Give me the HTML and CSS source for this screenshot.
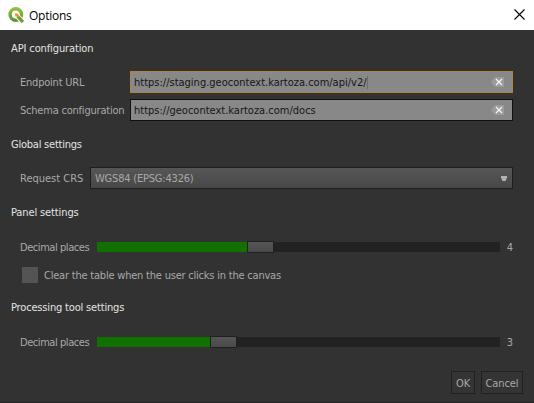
FILE: index.html
```html
<!DOCTYPE html>
<html lang="en">
<head>
<meta charset="utf-8">
<title>Options</title>
<link rel="stylesheet" href="styles.css">
</head>
<body>
<header class="titlebar">
  <svg class="logo" viewBox="0 0 16 16">
    <defs><linearGradient id="g" x1="0" y1="0" x2="0" y2="1"><stop offset="0" stop-color="#96be3c"/><stop offset="1" stop-color="#579a2d"/></linearGradient></defs>
    <circle cx="7.8" cy="7.5" r="5.7" fill="none" stroke="url(#g)" stroke-width="3.4"/>
    <path d="M8 8 15.5 15.5" stroke="#fff" stroke-width="5"/>
    <path d="M9.6 9.4 15 15" stroke="#6b9f35" stroke-width="3.2"/>
    <path d="M6.8 6.4h3.2l1.2 3.8-3.8-1z" fill="#ef8a35"/>
  </svg>
  <h1 class="title">Options</h1>
  <svg class="close" viewBox="0 0 11 11"><path d="M.5.5l10 10M10.5.5l-10 10"/></svg>
</header>
<main class="content">
  <h2 class="heading"><span class="t-api">API configuration</span></h2>
  <div class="row"><label class="label wide"><span class="t-endpoint">Endpoint URL</span></label>
    <div class="input focused"><span class="text">https://staging.geocontext.kartoza.com/api/v2/</span><i class="caret"></i>
      <svg class="clear" viewBox="0 0 13 10"><path class="tag" d="M0 5 3 1 4 0h9v10H4L3 9z"/><path class="x" d="M5 2l6 6M11 2 5 8"/></svg></div></div>
  <div class="row"><label class="label wide"><span class="t-schema">Schema configuration</span></label>
    <div class="input"><span class="text">https://geocontext.kartoza.com/docs</span>
      <svg class="clear" viewBox="0 0 13 10"><path class="tag" d="M0 5 3 1 4 0h9v10H4L3 9z"/><path class="x" d="M5 2l6 6M11 2 5 8"/></svg></div></div>
  <h2 class="heading"><span class="t-global">Global settings</span></h2>
  <div class="row"><label class="label mid">Request CRS</label>
    <div class="combo"><span class="text t-wgs">WGS84 (EPSG:4326)</span><svg class="arrow" viewBox="0 0 6 5"><path d="M0 0h6v1.5L4.5 5h-3L0 1.5z"/></svg></div></div>
  <h2 class="heading panel"><span class="t-panel">Panel settings</span></h2>
  <div class="row"><label class="label narrow"><span class="t-dec">Decimal places</span></label>
    <div class="slider"><i class="fill four"></i><i class="handle"></i></div><span class="value">4</span></div>
  <div class="row"><i class="checkbox"></i><label class="check-label"><span class="t-clear">Clear the table when the user clicks in the canvas</span></label></div>
  <h2 class="heading tight"><span class="t-proc">Processing tool settings</span></h2>
  <div class="row"><label class="label narrow"><span class="t-dec">Decimal places</span></label>
    <div class="slider"><i class="fill three"></i><i class="handle"></i></div><span class="value">3</span></div>
  <footer class="buttons"><button class="ok">OK</button><button class="cancel">Cancel</button></footer>
</main>
</body>
</html>
```
FILE: styles.css
```css
* { box-sizing: border-box; }
body {
  margin: 0;
  height: 403px;
  overflow: hidden;
  background: #323232;
  font: 11px/22px "DejaVu Sans Condensed", "DejaVu Sans", sans-serif;
  color: #a9a9a9;
  white-space: nowrap;
}
.titlebar {
  display: flex;
  align-items: center;
  height: 30px;
  padding: 0 9px 1px 8px;
  background: #fff;
  color: #000;
}
.logo { width: 16px; height: 16px; }
.title { flex: 1; margin: 2px 0 0 5px; font: 12px/20px "Open Sans", sans-serif; letter-spacing: -0.25px; }
.close { width: 11px; height: 11px; fill: none; stroke: #000; stroke-width: 1.1; }
.content {
  height: 373px;
  padding: 7px 21px 0 11px;
  border-bottom: 1px solid #232323;
}
.heading { height: 22px; margin: 0 0 12px; padding-top: 1px; font: inherit; color: #e4e4e4; }
.row { display: flex; align-items: center; height: 22px; margin-bottom: 6px; padding-left: 9px; }
.row + .heading { margin-top: 12px; }
.row + .heading.panel { margin-bottom: 13px; }
.row + .heading.tight { margin-top: 10px; margin-bottom: 13px; }
.row .label { flex: none; }
.label, .value, .check-label, .text { padding-top: 2px; }
.wide { width: 110px; }
.mid { width: 70px; }
.narrow { width: 77px; }
.t-api { letter-spacing: -0.12px; }
.t-endpoint { letter-spacing: -0.22px; }
.t-schema { letter-spacing: -0.21px; }
.t-global { letter-spacing: -0.23px; }
.t-wgs { letter-spacing: -0.2px; }
.t-panel { letter-spacing: -0.12px; }
.t-dec { letter-spacing: -0.44px; }
.t-clear { letter-spacing: -0.21px; }
.t-proc { letter-spacing: -0.17px; }
.input {
  display: flex;
  align-items: center;
  flex: 1;
  height: 22px;
  padding: 0 8px 0 3px;
  border: 1px solid #111;
  background: #888;
  color: #161616;
  line-height: 20px;
}
.focused { border-color: #b5813c; }
.caret { width: 1px; height: 13px; background: #6c6c6c; }
.clear { width: 13px; height: 10px; margin-left: auto; }
.tag { fill: #9b9b9b; }
.x { fill: none; stroke: #f4f4f4; stroke-width: 1.3; }
.combo {
  display: flex;
  align-items: center;
  flex: 1;
  height: 22px;
  padding: 0 5px 0 4px;
  border: 1px solid #1e1e1e;
  background: linear-gradient(#565656, #484848);
  line-height: 20px;
}
.arrow { width: 6px; height: 5px; margin-left: auto; fill: #b1b1b1; }
.slider { display: flex; align-items: center; width: 403px; height: 10px; background: #222; }
.fill { height: 10px; background: #107000; }
.four { width: 150px; }
.three { width: 113px; }
.handle { width: 27px; height: 12px; flex: none; border: 1px solid #202020; background: linear-gradient(#555, #4a4a4a); }
.value { margin-left: 7px; }
.checkbox { width: 16px; height: 16px; margin-left: 2px; background: #545454; }
.check-label { margin-left: 6px; }
.buttons { display: flex; justify-content: flex-end; gap: 6px; margin: 18px -10px 0 0; }
.buttons button {
  height: 23px;
  padding: 2px 0 0;
  border: 1px solid #202020;
  background: #343434;
  color: inherit;
  font: inherit;
  line-height: 19px;
}
.ok { width: 24px; }
.cancel { width: 42px; }
.ok, .cancel { letter-spacing: -0.1px; }
```
